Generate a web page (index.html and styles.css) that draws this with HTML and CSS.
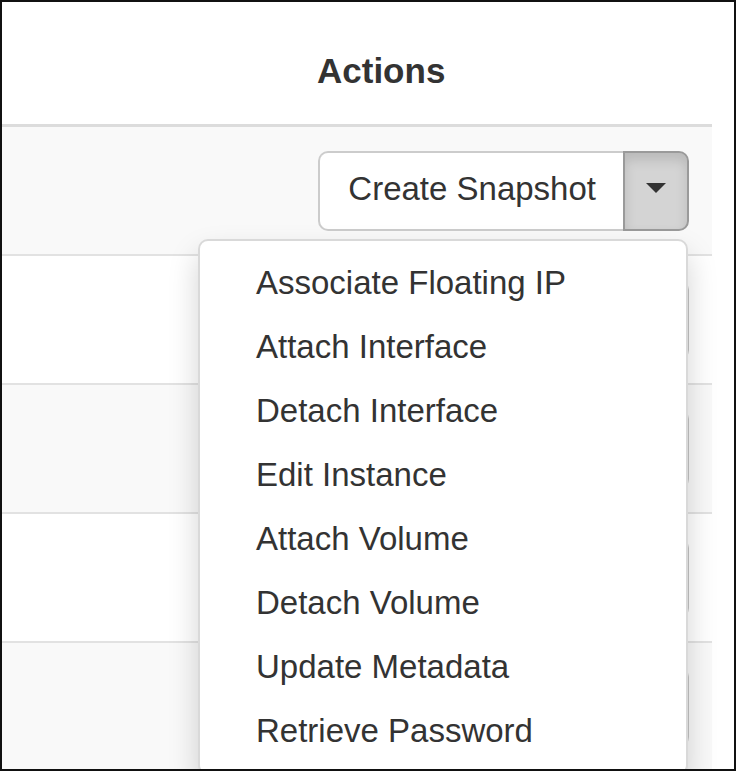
FILE: index.html
```html
<!DOCTYPE html>
<html lang="en">
<head>
<meta charset="utf-8">
<title>Instances - Actions</title>
<link rel="stylesheet" href="styles.css">
</head>
<body>
<div class="frame">
  <table class="table">
    <thead>
      <tr>
        <th class="filler"></th>
        <th class="actions-col"><div class="th-inner">Actions</div></th>
      </tr>
    </thead>
    <tbody>
      <tr>
        <td class="filler"></td>
        <td class="actions-col">
          <div class="cell-inner">
            <div class="btn-group open">
              <button class="btn btn-main" type="button">Create Snapshot</button>
              <button class="btn btn-toggle" type="button" aria-label="More actions"><span class="caret"></span></button>
              <ul class="menu">
                <li><a href="#">Associate Floating IP</a></li>
                <li><a href="#">Attach Interface</a></li>
                <li><a href="#">Detach Interface</a></li>
                <li><a href="#">Edit Instance</a></li>
                <li><a href="#">Attach Volume</a></li>
                <li><a href="#">Detach Volume</a></li>
                <li><a href="#">Update Metadata</a></li>
                <li><a href="#">Retrieve Password</a></li>
              </ul>
            </div>
          </div>
        </td>
      </tr>
      <tr>
        <td class="filler"></td>
        <td class="actions-col">
          <div class="cell-inner">
            <div class="btn-group">
              <button class="btn btn-main btn-covered" type="button" aria-label="Create Snapshot"></button>
              <button class="btn btn-toggle-idle" type="button" aria-label="More actions"><span class="caret"></span></button>
            </div>
          </div>
        </td>
      </tr>
      <tr>
        <td class="filler"></td>
        <td class="actions-col">
          <div class="cell-inner">
            <div class="btn-group">
              <button class="btn btn-main btn-covered" type="button" aria-label="Create Snapshot"></button>
              <button class="btn btn-toggle-idle" type="button" aria-label="More actions"><span class="caret"></span></button>
            </div>
          </div>
        </td>
      </tr>
      <tr>
        <td class="filler"></td>
        <td class="actions-col">
          <div class="cell-inner">
            <div class="btn-group">
              <button class="btn btn-main btn-covered" type="button" aria-label="Create Snapshot"></button>
              <button class="btn btn-toggle-idle" type="button" aria-label="More actions"><span class="caret"></span></button>
            </div>
          </div>
        </td>
      </tr>
      <tr>
        <td class="filler"></td>
        <td class="actions-col">
          <div class="cell-inner">
            <div class="btn-group">
              <button class="btn btn-main btn-covered" type="button" aria-label="Create Snapshot"></button>
              <button class="btn btn-toggle-idle" type="button" aria-label="More actions"><span class="caret"></span></button>
            </div>
          </div>
        </td>
      </tr>
    </tbody>
  </table>
</div>
</body>
</html>
```

FILE: styles.css
```css
html, body {
  margin: 0;
  padding: 0;
  background: #fff;
}

body {
  font-family: "Liberation Sans", Helvetica, Arial, sans-serif;
  color: #333;
}

.frame {
  box-sizing: border-box;
  width: 736px;
  height: 771px;
  border: 2px solid #111;
  overflow: hidden;
  background: #fff;
  padding-right: 22px;
}

.table {
  width: 710px;
  border-collapse: separate;
  border-spacing: 0;
}

.table th,
.table td {
  padding: 0;
}

.table th {
  border-bottom: 3px solid #dcdcdc;
  text-align: left;
}

.table td {
  border-bottom: 2px solid #e2e2e2;
}

.table tbody tr:nth-child(odd) td {
  background: #f9f9f9;
}

.actions-col {
  width: 1px;
  white-space: nowrap;
  padding: 0 23px !important;
}

.th-inner {
  box-sizing: border-box;
  height: 122px;
  padding: 44px 0 0 0;
  line-height: 50px;
  font-size: 35px;
  font-weight: bold;
  color: #333;
}

.cell-inner {
  height: 127px;
  display: flex;
  align-items: center;
  justify-content: flex-end;
}

.btn-group {
  position: relative;
  display: flex;
}

.btn {
  box-sizing: border-box;
  height: 80px;
  margin: 0;
  font-family: "Liberation Sans", Helvetica, Arial, sans-serif;
  font-size: 33px;
  color: #333;
  background: #fff;
  cursor: pointer;
}

.btn-main {
  padding: 0 27px 4px 28px;
  border: 2px solid #cccccc;
  border-right: 0;
  border-radius: 10px 0 0 10px;
}

.btn-covered {
  width: 306px;
}

.btn-toggle,
.btn-toggle-idle {
  width: 66px;
  padding: 0;
  display: flex;
  align-items: center;
  justify-content: center;
  border-radius: 0 10px 10px 0;
}

.btn-toggle {
  background: #d4d4d4;
  border: 2px solid #9a9a9a;
  box-shadow: inset 0 7px 12px rgba(0, 0, 0, 0.125);
}

.btn-toggle-idle {
  border: 2px solid #c4c4c4;
}

.caret {
  display: block;
  width: 0;
  height: 0;
  margin-top: -5px;
  border-top: 10px solid #333;
  border-left: 10px solid transparent;
  border-right: 10px solid transparent;
}

.menu {
  position: absolute;
  z-index: 1000;
  top: calc(100% + 8px);
  right: 1px;
  box-sizing: border-box;
  width: 490px;
  margin: 0;
  padding: 10px 0;
  list-style: none;
  background: #fff;
  border: 2px solid rgba(0, 0, 0, 0.15);
  border-radius: 10px;
  box-shadow: 0 15px 30px rgba(0, 0, 0, 0.175);
}

.menu li {
  height: 64px;
}

.menu a {
  display: block;
  padding: 0 56px;
  height: 64px;
  line-height: 64px;
  font-size: 33px;
  color: #333;
  text-decoration: none;
  white-space: nowrap;
}
```
